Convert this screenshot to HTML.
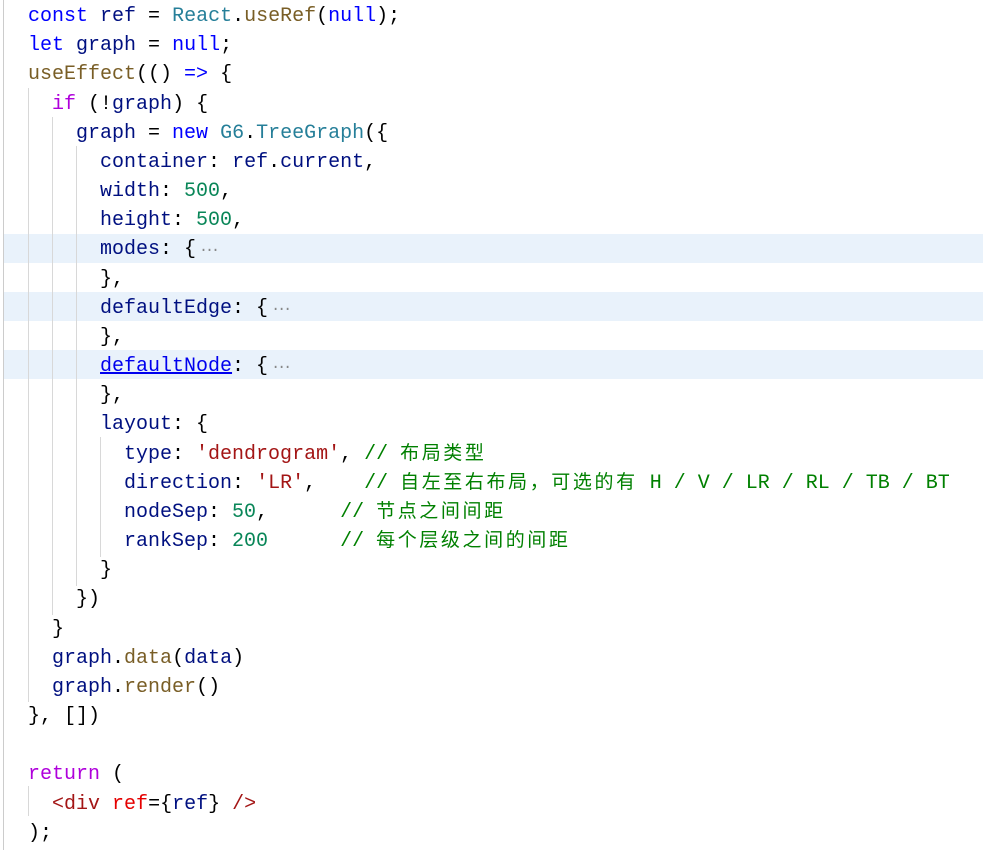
<!DOCTYPE html>
<html><head><meta charset="utf-8"><style>
body{margin:0;width:983px;height:850px;background:#fff;overflow:hidden;position:relative}
.code{position:absolute;left:28px;top:2px;font-family:"Liberation Mono","Noto Sans CJK SC",monospace;font-size:20px;line-height:29.17px;white-space:pre;color:#000}
.hl{position:absolute;left:4px;width:979px;height:29px;background:#e9f2fb}
.g{position:absolute;width:1px;background:#d8d8d8}
.k{color:#0000ff}.v{color:#001080}.t{color:#267f99}.f{color:#795e26}.p{color:#af00db}.n{color:#098658}.s{color:#a31515}.c{color:#008000}.d{color:#888;font-size:15px;line-height:0;padding-left:3px;letter-spacing:-3px}
.u{color:#0000ee;text-decoration:underline}
.cj{font-family:"Noto Sans CJK SC","Liberation Mono",sans-serif;font-size:19px;letter-spacing:2.6px;line-height:0}
</style></head><body>
<div class="hl" style="top:234px"></div>
<div class="hl" style="top:292px"></div>
<div class="hl" style="top:350px"></div>
<div class="g" style="left:3px;top:0;height:850px;background:#ccc"></div>
<div class="g" style="left:28px;top:88px;height:614px"></div>
<div class="g" style="left:52px;top:117px;height:498px"></div>
<div class="g" style="left:76px;top:146px;height:440px"></div>
<div class="g" style="left:100px;top:437px;height:120px"></div>
<div class="g" style="left:28px;top:786px;height:30px"></div>
<div class="code"><span class="k">const</span> <span class="v">ref</span> = <span class="t">React</span>.<span class="f">useRef</span>(<span class="k">null</span>);
<span class="k">let</span> <span class="v">graph</span> = <span class="k">null</span>;
<span class="f">useEffect</span>(() <span class="k">=&gt;</span> {
  <span class="p">if</span> (!<span class="v">graph</span>) {
    <span class="v">graph</span> = <span class="k">new</span> <span class="t">G6</span>.<span class="t">TreeGraph</span>({
      <span class="v">container</span>: <span class="v">ref</span>.<span class="v">current</span>,
      <span class="v">width</span>: <span class="n">500</span>,
      <span class="v">height</span>: <span class="n">500</span>,
      <span class="v">modes</span>: {<span class="d">···</span>
      },
      <span class="v">defaultEdge</span>: {<span class="d">···</span>
      },
      <span class="u">defaultNode</span>: {<span class="d">···</span>
      },
      <span class="v">layout</span>: {
        <span class="v">type</span>: <span class="s">'dendrogram'</span>, <span class="c">// <span class="cj">布局类型</span></span>
        <span class="v">direction</span>: <span class="s">'LR'</span>,    <span class="c">// <span class="cj">自左至右布局，可选的有</span> H / V / LR / RL / TB / BT</span>
        <span class="v">nodeSep</span>: <span class="n">50</span>,      <span class="c">// <span class="cj">节点之间间距</span></span>
        <span class="v">rankSep</span>: <span class="n">200</span>      <span class="c">// <span class="cj">每个层级之间的间距</span></span>
      }
    })
  }
  <span class="v">graph</span>.<span class="f">data</span>(<span class="v">data</span>)
  <span class="v">graph</span>.<span class="f">render</span>()
}, [])

<span class="p">return</span> (
  <span class="s">&lt;div</span> <span class="v" style="color:#e50000">ref</span>={<span class="v">ref</span>} <span class="s">/&gt;</span>
);</div>
</body></html>
